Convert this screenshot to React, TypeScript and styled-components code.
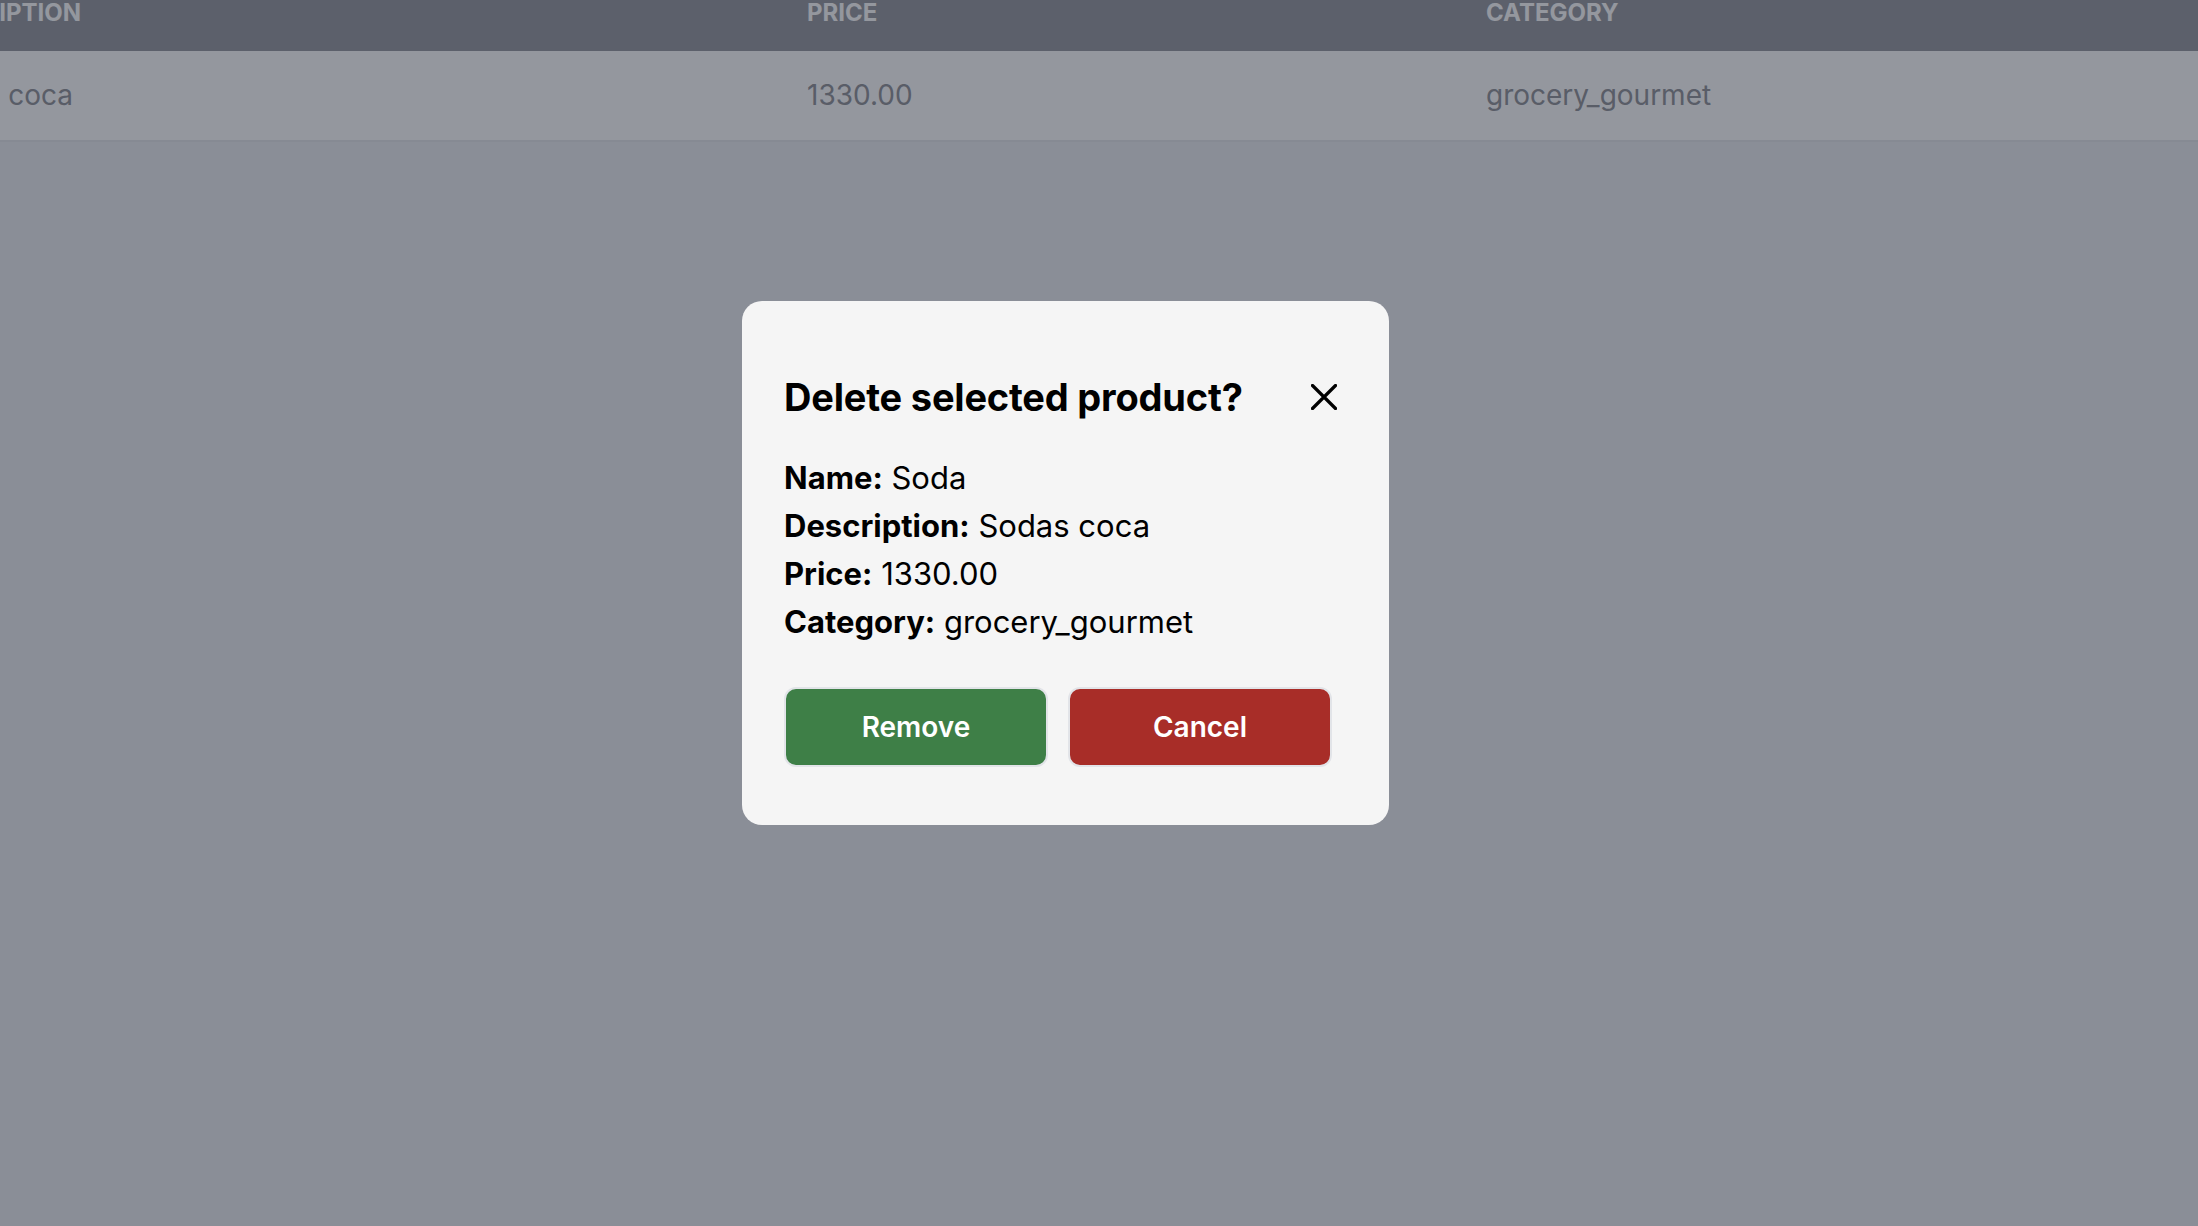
import React, { useLayoutEffect, useRef } from "react";
import styled, { createGlobalStyle } from "styled-components";

const GlobalStyle = createGlobalStyle`
  html, body { margin: 0; padding: 0; height: 100%; }
  body {
    font-family: Inter, "Noto Sans", "Liberation Sans", sans-serif;
    background: #edeef2;
    overflow: hidden;
  }
  #root { height: 100%; }
  * { box-sizing: border-box; }
`;

const Viewport = styled.div`
  width: 100vw;
  height: 100vh;
  overflow: hidden;
  background: #edeef2;
`;

const Table = styled.div`
  display: grid;
  grid-template-columns: 600px 889px 679px 800px;
  width: max-content;
  padding-bottom: 1400px;
`;

const HeadCell = styled.div`
  background: #999ba3;
  color: #ffffff;
  font-size: 24px;
  line-height: 28px;
  font-weight: 700;
  text-transform: uppercase;
  padding: 24px 24px;
  white-space: nowrap;
`;

const Cell = styled.div`
  background: #ffffff;
  color: #94959c;
  font-size: 28px;
  line-height: 34px;
  font-weight: 400;
  padding: 27px 24px 28px;
  border-bottom: 2px solid #e6e7eb;
  white-space: nowrap;
`;

const Overlay = styled.div`
  position: fixed;
  inset: 0;
  background: rgba(17, 24, 39, 0.45);
  display: flex;
  align-items: flex-start;
  justify-content: center;
  padding: 301px 67px 0 0;
`;

const Dialog = styled.div`
  width: 647px;
  background: #f5f5f5;
  border-radius: 20px;
  padding: 73px 42px 58px;
  display: flex;
  flex-direction: column;
  color: #000;
`;

const Header = styled.div`
  display: flex;
  align-items: center;
  justify-content: space-between;
`;

const Title = styled.h2`
  margin: 0;
  font-size: 38px;
  line-height: 46px;
  font-weight: 700;
  letter-spacing: -0.2px;
`;

const CloseButton = styled.button`
  width: 46px;
  height: 46px;
  border: none;
  background: transparent;
  padding: 0;
  display: flex;
  align-items: center;
  justify-content: center;
  cursor: pointer;
  color: #000;
`;

const Details = styled.div`
  margin-top: 34px;
  display: flex;
  flex-direction: column;
`;

const Line = styled.p`
  margin: 0;
  font-size: 31px;
  line-height: 48px;
  font-weight: 400;
  white-space: nowrap;
`;

const Label = styled.strong`
  font-weight: 700;
`;

const Actions = styled.div`
  margin-top: 41px;
  display: flex;
  gap: 20px;
`;

const ActionButton = styled.button<{ $tone: "confirm" | "cancel" }>`
  width: 264px;
  height: 80px;
  border-radius: 12px;
  border: 2px solid #e2e4e8;
  background: ${(p) => (p.$tone === "confirm" ? "#3e7f47" : "#a82d28")};
  color: #fff;
  font-family: Inter, "Noto Sans", "Liberation Sans", sans-serif;
  font-size: 28px;
  font-weight: 600;
  cursor: pointer;
`;

const columns = ["Name", "Description", "Price", "Category"];
const row = ["Soda", "Sodas coca", "1330.00", "grocery_gourmet"];

const details: [string, string][] = [
  ["Name", "Soda"],
  ["Description", "Sodas coca"],
  ["Price", "1330.00"],
  ["Category", "grocery_gourmet"],
];

export default function App() {
  const viewRef = useRef<HTMLDivElement>(null);

  useLayoutEffect(() => {
    if (viewRef.current) {
      viewRef.current.scrollLeft = 706;
      viewRef.current.scrollTop = 25;
    }
  }, []);

  return (
    <>
      <GlobalStyle />
      <Viewport ref={viewRef}>
        <Table>
          {columns.map((c) => (
            <HeadCell key={c}>{c}</HeadCell>
          ))}
          {row.map((v, i) => (
            <Cell key={i}>{v}</Cell>
          ))}
        </Table>
      </Viewport>
      <Overlay>
        <Dialog role="dialog">
          <Header>
            <Title>Delete selected product?</Title>
            <CloseButton aria-label="Close">
              <svg width="26" height="26" viewBox="0 0 26 26" fill="none">
                <path
                  d="M1.5 1.5 L24.5 24.5 M24.5 1.5 L1.5 24.5"
                  stroke="currentColor"
                  strokeWidth="3.2"
                  strokeLinecap="round"
                />
              </svg>
            </CloseButton>
          </Header>
          <Details>
            {details.map(([k, v]) => (
              <Line key={k}>
                <Label>{k}:</Label> {v}
              </Line>
            ))}
          </Details>
          <Actions>
            <ActionButton $tone="confirm">Remove</ActionButton>
            <ActionButton $tone="cancel">Cancel</ActionButton>
          </Actions>
        </Dialog>
      </Overlay>
    </>
  );
}
